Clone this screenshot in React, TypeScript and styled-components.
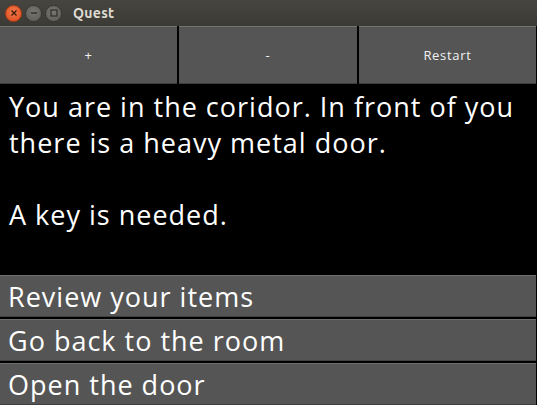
import React from "react";
import styled, { createGlobalStyle } from "styled-components";

const Global = createGlobalStyle`
  html, body { margin: 0; padding: 0; background: #000; }
  body { width: 537px; height: 405px; overflow: hidden; font-family: "Open Sans", "Noto Sans", sans-serif; }
  #root { height: 405px; }
`;

const Window = styled.div`
  width: 537px;
  height: 405px;
  display: flex;
  flex-direction: column;
  background: #000;
`;

const TitleBar = styled.div`
  height: 26px;
  flex: none;
  display: flex;
  align-items: center;
  padding-left: 5px;
  gap: 3px;
  background: linear-gradient(#46453f, #3b3a36);
  box-sizing: border-box;
`;

const WinBtn = styled.div<{ $kind: "close" | "min" | "max" }>`
  width: 17px;
  height: 17px;
  border-radius: 50%;
  box-sizing: border-box;
  display: flex;
  align-items: center;
  justify-content: center;
  background: ${(p) =>
    p.$kind === "close"
      ? "radial-gradient(circle at 50% 40%, #f37a4c, #d94a1c)"
      : "radial-gradient(circle at 50% 40%, #777671, #5b5a55)"};
  border: 1px solid ${(p) => (p.$kind === "close" ? "#b23a12" : "#3a3935")};
`;

const Title = styled.div`
  margin-left: 8px;
  font-family: "Ubuntu", "DejaVu Sans", sans-serif;
  font-weight: bold;
  font-size: 14px;
  color: #dfdbd2;
  letter-spacing: 0.3px;
`;

const Toolbar = styled.div`
  height: 58px;
  flex: none;
  display: grid;
  grid-template-columns: 177px 178px 177px;
  column-gap: 2px;
  padding-right: 1px;
`;

const ToolButton = styled.div`
  background: #555555;
  border-top: 1px solid #727272;
  border-bottom: 1px solid #3e3e3e;
  box-sizing: border-box;
  display: flex;
  align-items: center;
  justify-content: center;
  color: #f2f2f2;
  font-size: 13px;
  letter-spacing: 0.7px;
  font-family: "Open Sans", "Noto Sans", sans-serif;
`;

const Story = styled.div`
  flex: 1;
  color: #ffffff;
  font-size: 27px;
  line-height: 36px;
  letter-spacing: 1px;
  padding: 5px 9px 0 9px;
  white-space: pre-wrap;
`;

const Options = styled.div`
  flex: none;
  display: flex;
  flex-direction: column;
  gap: 2px;
  padding-right: 1px;
`;

const Option = styled.div`
  height: 42px;
  background: #555555;
  border-top: 1px solid #6e6e6e;
  border-bottom: 1px solid #3e3e3e;
  box-sizing: border-box;
  color: #ffffff;
  font-size: 27px;
  letter-spacing: 1px;
  display: flex;
  align-items: center;
  padding-left: 8px;
`;

const Glyph = styled.svg`
  display: block;
`;

export default function App() {
  return (
    <>
      <Global />
      <Window>
        <TitleBar>
          <WinBtn $kind="close">
            <Glyph width="8" height="8" viewBox="0 0 8 8">
              <path d="M1.5 1.5 L6.5 6.5 M6.5 1.5 L1.5 6.5" stroke="#3b1a0a" strokeWidth="1.3" />
            </Glyph>
          </WinBtn>
          <WinBtn $kind="min">
            <Glyph width="8" height="8" viewBox="0 0 8 8">
              <path d="M1 4 L7 4" stroke="#2e2d2a" strokeWidth="1.4" />
            </Glyph>
          </WinBtn>
          <WinBtn $kind="max">
            <Glyph width="8" height="8" viewBox="0 0 8 8">
              <rect x="1" y="1" width="6" height="6" fill="none" stroke="#2e2d2a" strokeWidth="1.2" />
            </Glyph>
          </WinBtn>
          <Title>Quest</Title>
        </TitleBar>
        <Toolbar>
          <ToolButton>+</ToolButton>
          <ToolButton>-</ToolButton>
          <ToolButton>Restart</ToolButton>
        </Toolbar>
        <Story>{"You are in the coridor. In front of you\nthere is a heavy metal door.\n\nA key is needed."}</Story>
        <Options>
          <Option>Review your items</Option>
          <Option>Go back to the room</Option>
          <Option>Open the door</Option>
        </Options>
      </Window>
    </>
  );
}
